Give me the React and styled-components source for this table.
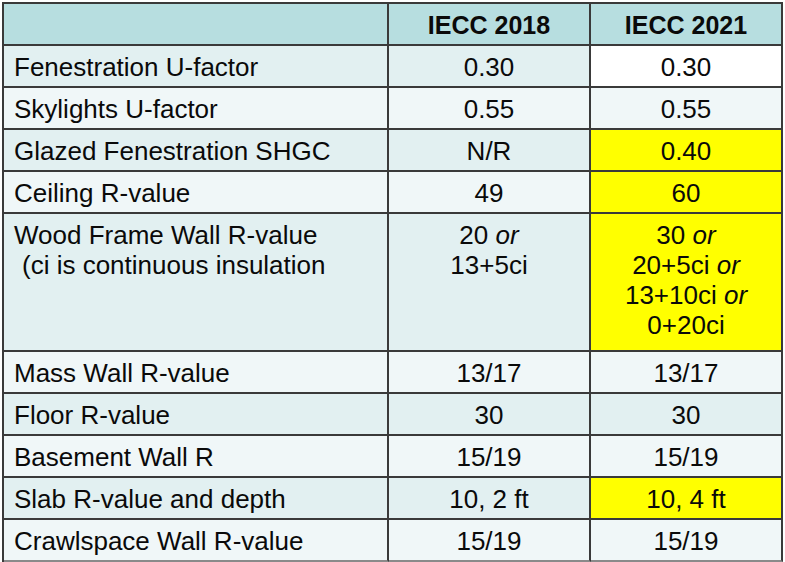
import React from "react";
import styled, { createGlobalStyle } from "styled-components";

const Global = createGlobalStyle`
  html, body { margin: 0; padding: 0; background: #ffffff; }
  body { font-family: "Liberation Sans", Arial, sans-serif; }
`;

const Page = styled.div`
  padding: 2px 0 0 2px;
`;

const Table = styled.table`
  border-collapse: separate;
  border-spacing: 0;
  border-top: 2px solid #3a3a3a;
  border-left: 2px solid #3a3a3a;
  table-layout: fixed;
  width: 781px;
  font-family: "Liberation Sans", Arial, sans-serif;
  font-size: 26px;
  line-height: 30px;
  color: #0a0a0a;
`;

const bgFor = (tone) =>
  ({
    head: "#b7dee0",
    dark: "#e2f0f1",
    light: "#f0f7f8",
    white: "#ffffff",
    yellow: "#ffff00",
  })[tone];

const Cell = styled.td`
  box-sizing: border-box;
  height: ${(p) => p.$h}px;
  padding: 6px 4px 0 ${(p) => (p.$label ? 10 : 4)}px;
  vertical-align: top;
  text-align: ${(p) => (p.$label ? "left" : "center")};
  background: ${(p) => bgFor(p.$tone)};
  border-right: 2px solid #3a3a3a;
  border-bottom: 2px solid ${(p) => (p.$last ? "#8a8a8a" : "#3a3a3a")};
  font-weight: ${(p) => (p.$head ? 700 : 400)};
  font-size: ${(p) => (p.$head ? 25 : 26)}px;
  white-space: nowrap;
`;

const Indent = styled.span`
  display: inline-block;
  padding-left: 8px;
`;

const Or = styled.i`
  font-style: italic;
`;

const rows = [
  { label: "Fenestration U-factor", a: "0.30", b: "0.30", tone: "dark", bTone: "white" },
  { label: "Skylights U-factor", a: "0.55", b: "0.55", tone: "light" },
  { label: "Glazed Fenestration SHGC", a: "N/R", b: "0.40", tone: "dark", bTone: "yellow" },
  { label: "Ceiling R-value", a: "49", b: "60", tone: "light", bTone: "yellow" },
  {
    label: (
      <>
        Wood Frame Wall R-value
        <br />
        <Indent>(ci is continuous insulation</Indent>
      </>
    ),
    a: (
      <>
        20 <Or>or</Or>
        <br />
        13+5ci
      </>
    ),
    b: (
      <>
        30 <Or>or</Or>
        <br />
        20+5ci <Or>or</Or>
        <br />
        13+10ci <Or>or</Or>
        <br />
        0+20ci
      </>
    ),
    tone: "dark",
    bTone: "yellow",
    h: 138,
  },
  { label: "Mass Wall R-value", a: "13/17", b: "13/17", tone: "light" },
  { label: "Floor R-value", a: "30", b: "30", tone: "dark" },
  { label: "Basement Wall R", a: "15/19", b: "15/19", tone: "light" },
  { label: "Slab R-value and depth", a: "10, 2 ft", b: "10, 4 ft", tone: "dark", bTone: "yellow" },
  { label: "Crawlspace Wall R-value", a: "15/19", b: "15/19", tone: "light" },
];

export default function App() {
  return (
    <>
      <Global />
      <Page>
        <Table>
          <colgroup>
            <col style={{ width: 385 }} />
            <col style={{ width: 202 }} />
            <col style={{ width: 192 }} />
          </colgroup>
          <thead>
            <tr>
              <Cell $tone="head" $h={42} $label />
              <Cell $tone="head" $h={42} $head>
                IECC 2018
              </Cell>
              <Cell $tone="head" $h={42} $head>
                IECC 2021
              </Cell>
            </tr>
          </thead>
          <tbody>
            {rows.map((r, i) => {
              const h = r.h || 42;
              const last = i === rows.length - 1;
              return (
                <tr key={i}>
                  <Cell $tone={r.tone} $h={h} $label $last={last}>
                    {r.label}
                  </Cell>
                  <Cell $tone={r.tone} $h={h} $last={last}>
                    {r.a}
                  </Cell>
                  <Cell $tone={r.bTone || r.tone} $h={h} $last={last}>
                    {r.b}
                  </Cell>
                </tr>
              );
            })}
          </tbody>
        </Table>
      </Page>
    </>
  );
}
